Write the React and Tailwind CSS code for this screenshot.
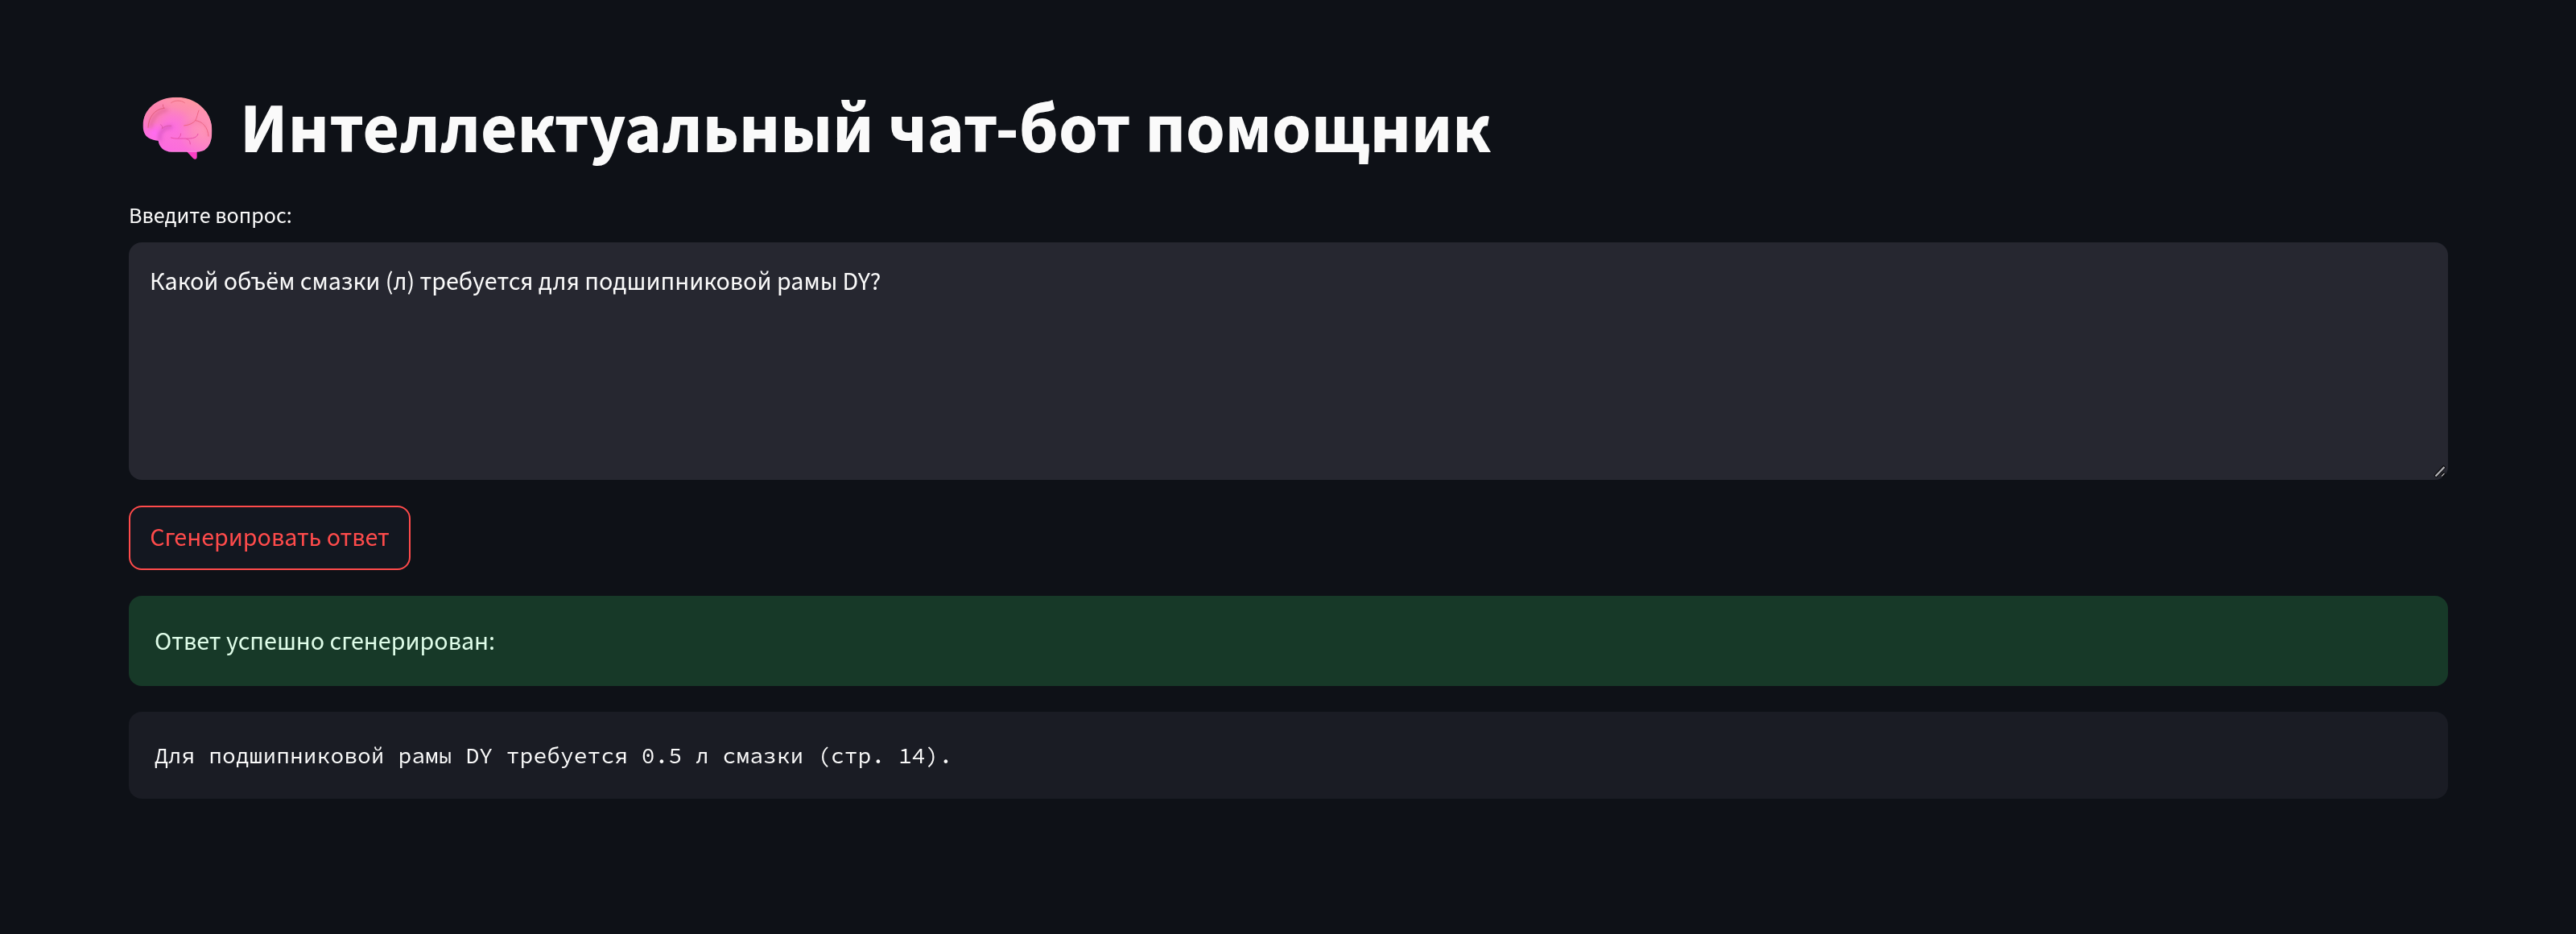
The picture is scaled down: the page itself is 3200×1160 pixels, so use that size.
import React from 'react';

function BrainIcon({ className }) {
  return (
    <svg className={className} viewBox="112 91 261 234" aria-hidden="true">
      <defs>
        <linearGradient id="lobe" x1="0.3" y1="1" x2="0.75" y2="0">
          <stop offset="0" stopColor="#fc68e4" />
          <stop offset="0.45" stopColor="#fb7ac8" />
          <stop offset="1" stopColor="#ff9c9c" />
        </linearGradient>
        <radialGradient id="glow" gradientUnits="userSpaceOnUse" cx="225" cy="210" r="80">
          <stop offset="0" stopColor="#fd70e0" />
          <stop offset="1" stopColor="#fd70e0" stopOpacity="0" />
        </radialGradient>
        <radialGradient id="crown" gradientUnits="userSpaceOnUse" cx="150" cy="150" r="70">
          <stop offset="0" stopColor="#fb84aa" />
          <stop offset="1" stopColor="#fb84aa" stopOpacity="0" />
        </radialGradient>
        <radialGradient id="front" gradientUnits="userSpaceOnUse" cx="158" cy="228" r="42">
          <stop offset="0" stopColor="#ff6cf0" />
          <stop offset="1" stopColor="#ff6cf0" stopOpacity="0" />
        </radialGradient>
        <radialGradient id="back" gradientUnits="userSpaceOnUse" cx="350" cy="215" r="105">
          <stop offset="0" stopColor="#ff96b8" />
          <stop offset="1" stopColor="#ff96b8" stopOpacity="0" />
        </radialGradient>
        <filter id="soft" x="-40%" y="-40%" width="180%" height="180%">
          <feGaussianBlur stdDeviation="6" />
        </filter>
        <clipPath id="outline">
          <path d="M114 198C114 140 165 93 238 93C318 93 371 150 371 218C371 272 352 297 312 297H222C190 297 173 276 171 255C140 252 113 240 114 198Z" />
        </clipPath>
      </defs>
      <path d="M276 294L301 321Q305 325 310 324Q315 323 315 317V292Z" fill="#fb3fc4" />
      <g clipPath="url(#outline)">
        <rect x="112" y="91" width="262" height="208" fill="url(#lobe)" />
        <rect x="112" y="91" width="262" height="208" fill="url(#crown)" />
        <rect x="112" y="91" width="262" height="208" fill="url(#glow)" />
        <rect x="112" y="91" width="262" height="208" fill="url(#back)" />
        <rect x="112" y="91" width="262" height="208" fill="url(#front)" />
        <g fill="none" strokeLinecap="round" filter="url(#soft)">
          <path d="M142 204C147 170 168 147 200 141" stroke="#dc5c92" strokeWidth="13" opacity="0.6" />
          <path d="M177 250C173 224 190 206 218 204" stroke="#c84cb0" strokeWidth="13" opacity="0.6" />
          <path d="M270 200L308 182L345 195L360 240" stroke="#ec6a8c" strokeWidth="8" opacity="0.35" />
        </g>
        <g fill="none" strokeLinecap="round" strokeWidth="3">
          <path d="M133 206C134 170 156 137 193 134M193 134Q187 129 188 121" stroke="#e0607f" />
          <path d="M219 114C231 104 256 103 269 114" stroke="#ec6c82" />
          <path d="M267 199C286 197 300 191 309 180C335 183 356 205 358 238M309 180C316 169 317 154 322 142" stroke="#ec6585" />
          <path d="M219 200C207 198 193 202 184 210M180 195Q188 201 187 209" stroke="#dc58ac" />
          <path d="M218 244C234 249 248 247 266 247C289 248 315 248 319 230M255 229Q256 239 246 245M276 249C287 251 289 258 290 268" stroke="#e650a6" />
        </g>
        <path d="M205 296H330" stroke="#ff9fe6" strokeWidth="3" />
      </g>
    </svg>
  );
}

export default function App() {
  return (
    <main className="flex min-h-[1160px] flex-col bg-[#0e1117] pt-[109px] pr-[159px] pl-40 font-['Source_Sans_3','Source_Sans_Pro','Noto_Sans',sans-serif] text-[#fafafa]">
      <h1 className="flex h-[106px] items-start text-[88px] leading-[105.6px] font-bold whitespace-nowrap">
        <BrainIcon className="mt-[11px] mr-[34px] ml-[17px] h-[78px] w-[87px] shrink-0" />
        <span>Интеллектуальный чат-бот помощник</span>
      </h1>
      <label className="mt-[31px] h-[55px] text-[28px] leading-[44.8px]">Введите вопрос:</label>
      <div className="relative h-[295px] rounded-2xl bg-[#262730] px-[26px] pt-[27px] text-[32px] leading-[44.8px]">
        Какой объём смазки (л) требуется для подшипниковой рамы DY?
        <svg className="absolute right-0 bottom-0 h-[20px] w-[20px]" viewBox="0 0 20 20" aria-hidden="true">
          <path d="M4 16L16 3M12 16L16 11.5" stroke="#0b0b0d" strokeWidth="4.5" />
          <path d="M4.5 15.5L15.5 4" stroke="#b4b4b8" strokeWidth="2.2" />
          <path d="M12 15.5L15.5 12" stroke="#b4b4b8" strokeWidth="1.2" />
        </svg>
      </div>
      <button className="mt-8 flex h-20 w-[350px] items-center justify-center rounded-2xl border-2 border-[#ff4b4b] bg-[#131720] text-[32px] text-[#ff4b4b]">
        Сгенерировать ответ
      </button>
      <div className="mt-8 flex h-28 items-center rounded-2xl bg-[#173928] px-8 pt-0.5 text-[32px] text-[#dffde9]">
        Ответ успешно сгенерирован:
      </div>
      <pre className="mt-8 flex h-[108px] items-center rounded-2xl bg-[#1a1c24] px-8 font-['Source_Code_Pro','Liberation_Mono',monospace] text-[28px]">
        Для подшипниковой рамы DY требуется 0.5 л смазки (стр. 14).
      </pre>
    </main>
  );
}
